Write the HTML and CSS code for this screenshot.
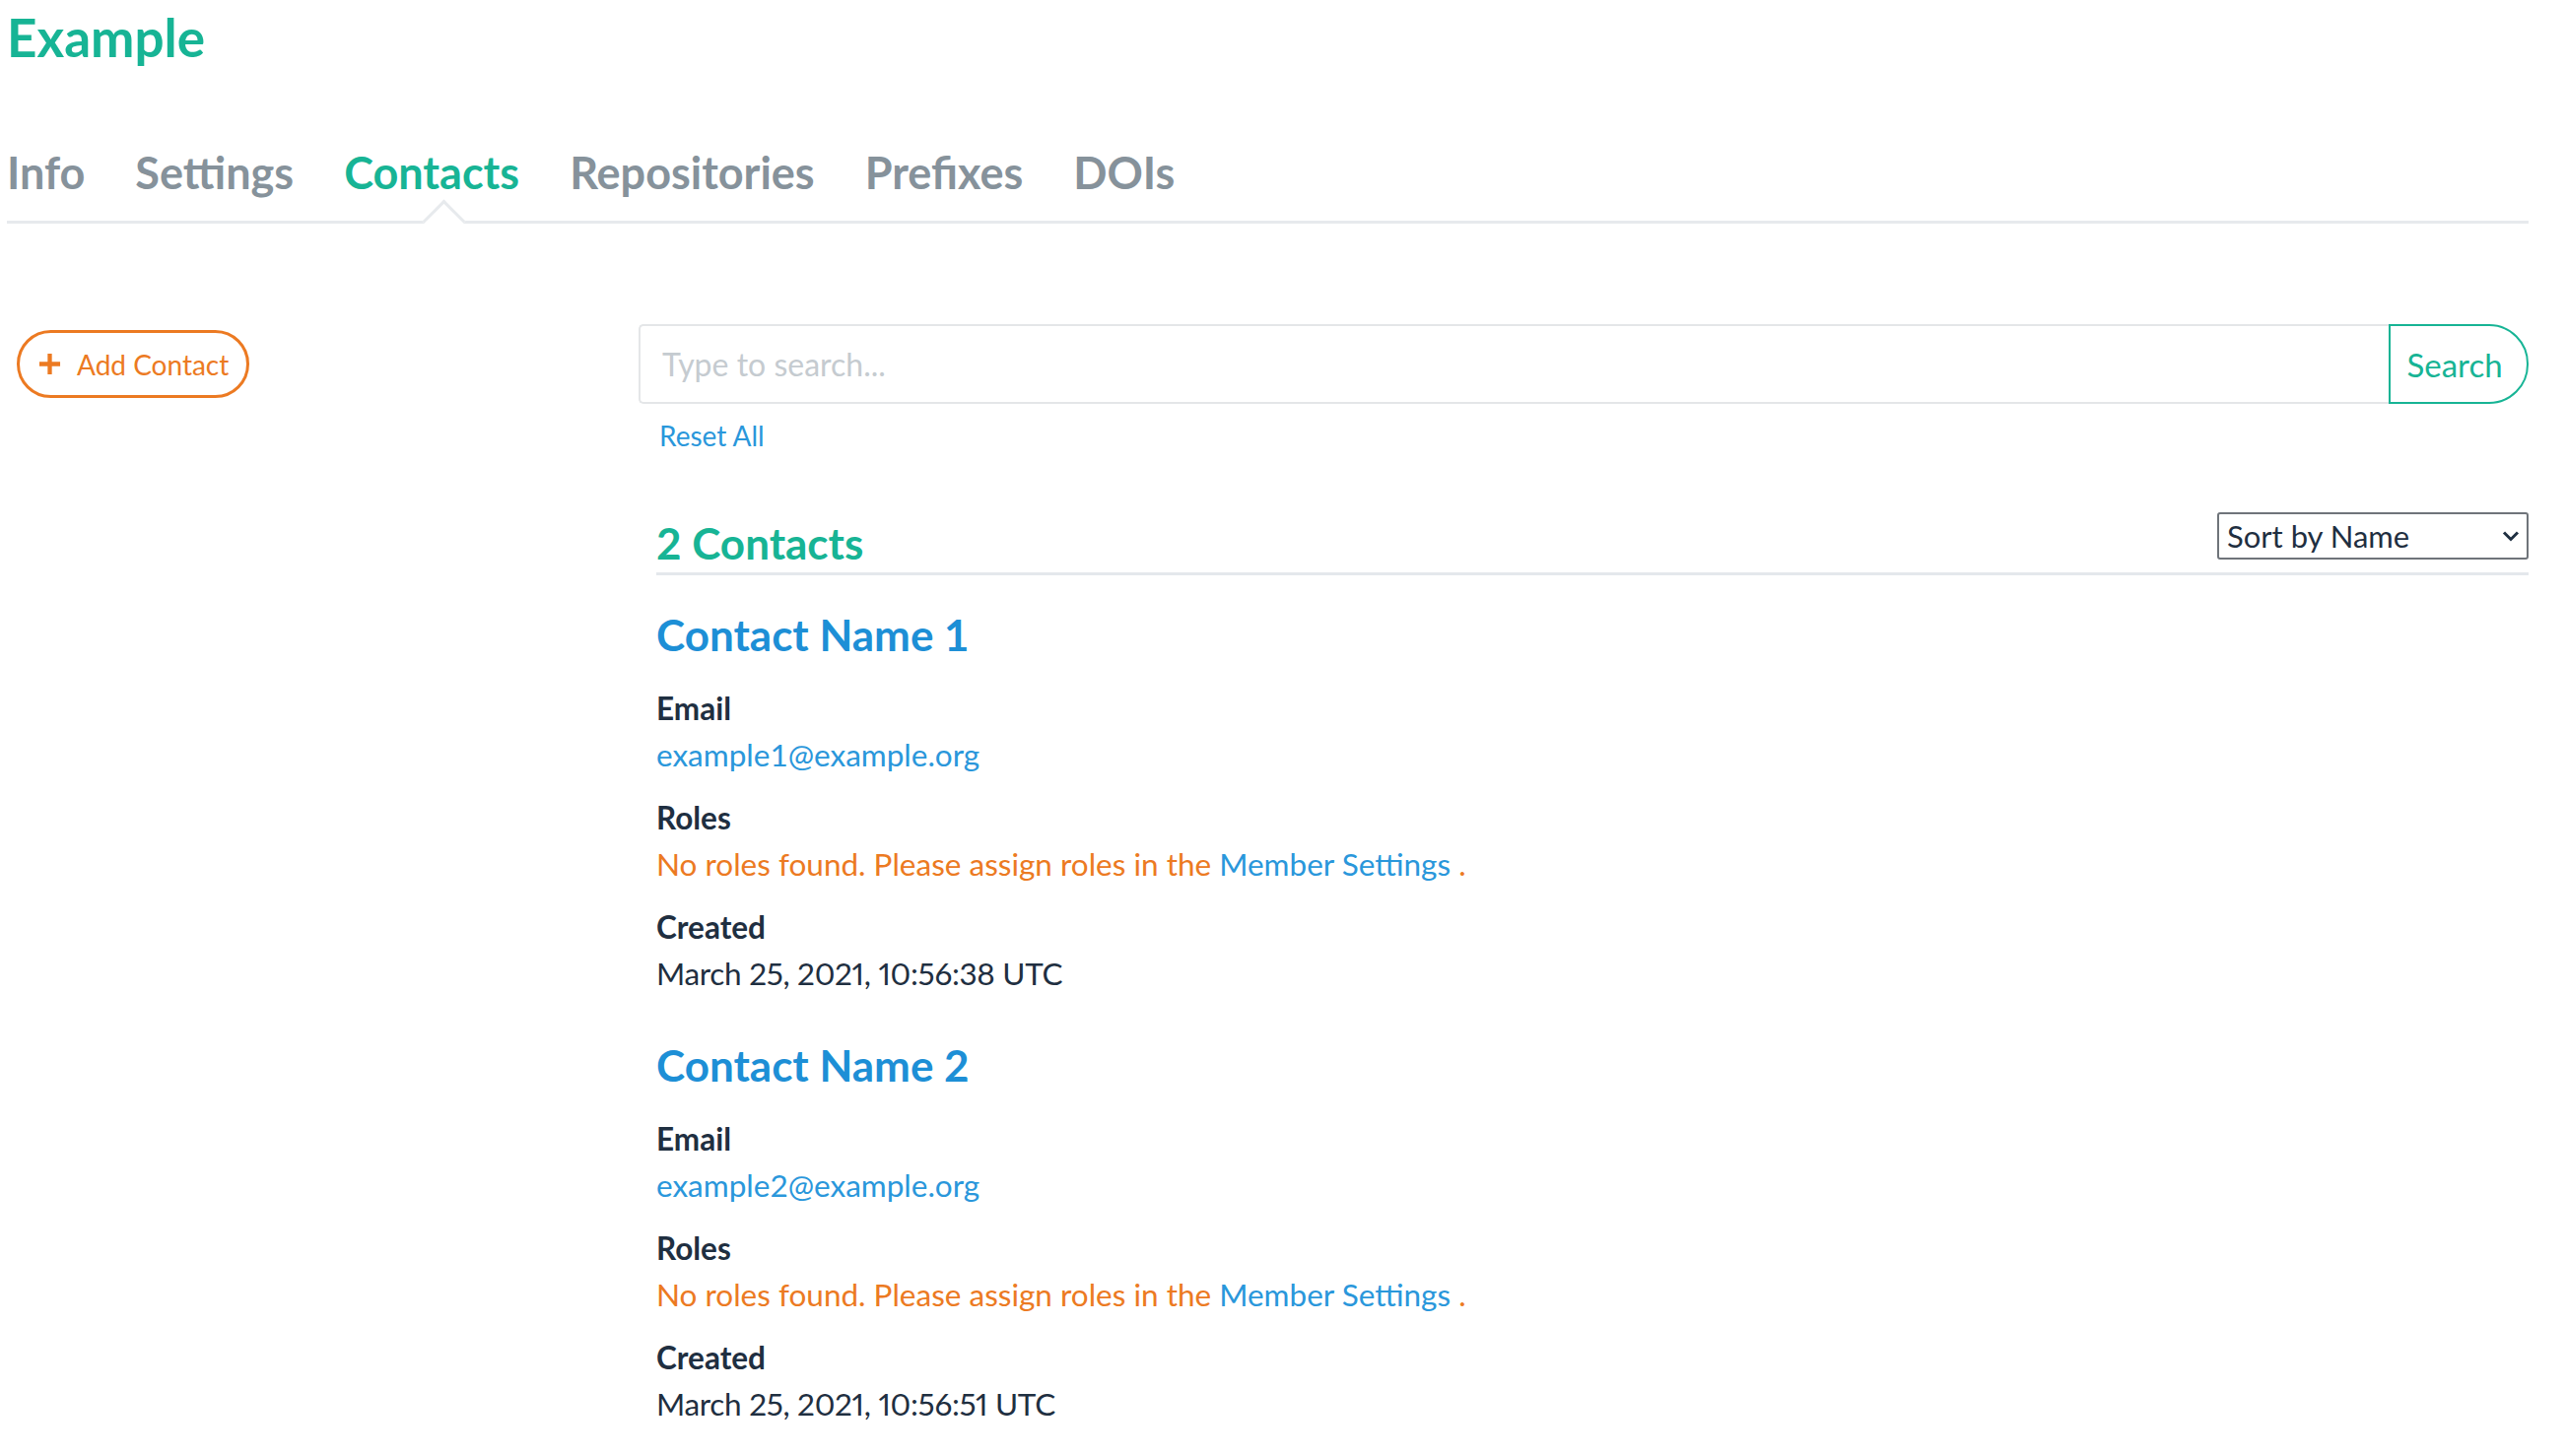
FILE: index.html
```html
<!DOCTYPE html>
<html lang="en">
<head>
<meta charset="utf-8">
<title>Example - Contacts</title>
<link rel="stylesheet" href="styles.css">
</head>
<body>
<div class="page">
  <h1 class="title">Example</h1>
  <nav class="tabs">
    <a class="tab">Info</a>
    <a class="tab">Settings</a>
    <a class="tab active">Contacts</a>
    <a class="tab">Repositories</a>
    <a class="tab">Prefixes</a>
    <a class="tab">DOIs</a>
  </nav>
  <div class="main">
    <aside class="side">
      <button class="btn-add" type="button">
        <svg class="plus" viewBox="0 0 24 24" width="23" height="23"><path d="M12 1v22M1 12h22" stroke="currentColor" stroke-width="4.5" fill="none"/></svg>
        <span>Add Contact</span>
      </button>
    </aside>
    <section class="content">
      <div class="search">
        <input class="search-input" type="text" placeholder="Type to search...">
        <button class="search-btn" type="button">Search</button>
      </div>
      <div class="reset-row"><a class="link">Reset All</a></div>
      <div class="list">
        <div class="list-head">
          <h3 class="count">2 Contacts</h3>
          <div class="sort-wrap">
            <select class="sort"><option>Sort by Name</option></select>
            <svg class="chev" viewBox="0 0 18 12" width="18" height="12"><path d="M2 2.5l7 7 7-7" stroke="currentColor" stroke-width="3" fill="none"/></svg>
          </div>
        </div>
        <div class="contact">
          <h3 class="name">Contact Name 1</h3>
          <div class="label">Email</div>
          <div class="value"><a class="link">example1@example.org</a></div>
          <div class="label">Roles</div>
          <div class="value warn">No roles found. Please assign roles in the <a class="link">Member Settings</a> .</div>
          <div class="label">Created</div>
          <div class="value date">March 25, 2021, 10:56:38 UTC</div>
        </div>
        <div class="contact">
          <h3 class="name">Contact Name 2</h3>
          <div class="label">Email</div>
          <div class="value"><a class="link">example2@example.org</a></div>
          <div class="label">Roles</div>
          <div class="value warn">No roles found. Please assign roles in the <a class="link">Member Settings</a> .</div>
          <div class="label">Created</div>
          <div class="value date">March 25, 2021, 10:56:51 UTC</div>
        </div>
      </div>
    </section>
  </div>
</div>
</body>
</html>
```

FILE: styles.css
```css
* { box-sizing: border-box; }
html, body { margin: 0; padding: 0; background: #fff; }
body {
  font-family: Lato, "Liberation Sans", sans-serif;
  color: #1f2f41;
}
.page {
  padding: 0 38px 0 7px;
}
.title {
  margin: 0;
  padding-top: 8px;
  font-size: 53px;
  line-height: 60px;
  font-weight: 700;
  color: #17b495;
}
.tabs {
  margin-top: 76px;
  display: flex;
  gap: 51px;
  border-bottom: 3px solid #e7eaed;
  height: 83px;
}
.tab {
  position: relative;
  font-size: 45px;
  line-height: 62px;
  font-weight: 700;
  color: #86929b;
}
.tab.active { color: #17b495; }
.tab.active::after {
  content: "";
  position: absolute;
  left: 50%;
  bottom: -16px;
  width: 28px;
  height: 28px;
  margin-left: -3px;
  background: #fff;
  border-top: 3px solid #e7eaed;
  border-left: 3px solid #e7eaed;
  transform: rotate(45deg);
}
.main {
  display: flex;
  padding-top: 102px;
}
.side {
  width: 641px;
  flex: none;
  padding-left: 10px;
  padding-top: 6px;
}
.btn-add {
  display: inline-flex;
  align-items: center;
  gap: 16px;
  height: 69px;
  padding: 0 18px 0 19px;
  border: 3px solid #ec7a22;
  border-radius: 35px;
  background: #fff;
  color: #ec7a22;
  font-family: Lato, "Liberation Sans", sans-serif;
  font-size: 28px;
}
.plus { width: 23px; height: 23px; flex: none; }
.content { flex: 1; }
.search {
  display: flex;
  height: 81px;
}
.search-input {
  flex: 1;
  border: 2px solid #e4e6e8;
  border-right: none;
  border-radius: 5px 0 0 5px;
  padding: 0 22px;
  font-family: Lato, "Liberation Sans", sans-serif;
  font-size: 32px;
  color: #333;
  outline: none;
}
.search-input::placeholder { color: #c5cbd0; }
.search-btn {
  width: 142px;
  border: 2px solid #17b495;
  border-radius: 0 40px 40px 0;
  background: #fff;
  color: #17b495;
  font-family: Lato, "Liberation Sans", sans-serif;
  font-size: 33px;
  padding: 0 8px 0 0;
}
.reset-row {
  padding: 12px 0 0 21px;
  font-size: 28px;
  line-height: 40px;
}
.link { color: #2a97db; text-decoration: none; }
.list { padding-left: 18px; }
.list-head {
  display: flex;
  align-items: flex-start;
  justify-content: space-between;
  border-bottom: 3px solid #e4e8ec;
  margin-top: 59px;
}
.count {
  margin: 0;
  font-size: 44px;
  line-height: 60px;
  font-weight: 700;
  color: #17b495;
}
.sort-wrap {
  position: relative;
  margin-top: -1px;
}
.sort {
  display: block;
  width: 316px;
  height: 48px;
  border: 2px solid #6f747a;
  border-radius: 3px;
  font-family: Lato, "Liberation Sans", sans-serif;
  font-size: 31px;
  color: #1f2f41;
  background: #fff;
  padding: 0 40px 0 8px;
  appearance: none;
  -webkit-appearance: none;
}
.chev {
  position: absolute;
  right: 9px;
  top: 18px;
  color: #1f2f41;
  pointer-events: none;
}
.contact { padding-top: 30px; }
.contact + .contact { padding-top: 22px; }
.name {
  margin: 0 0 22px;
  font-size: 44px;
  line-height: 60px;
  font-weight: 700;
  color: #1d8fd6;
}
.label {
  font-size: 31.5px;
  line-height: 47px;
  font-weight: 700;
  color: #1f2f41;
}
.value {
  font-size: 31.5px;
  line-height: 47px;
  margin-bottom: 17px;
  color: #1f2f41;
}
.value.date {
  font-variant-numeric: proportional-nums;
  letter-spacing: -0.3px;
}
.value.warn { color: #ec7a22; }
```
